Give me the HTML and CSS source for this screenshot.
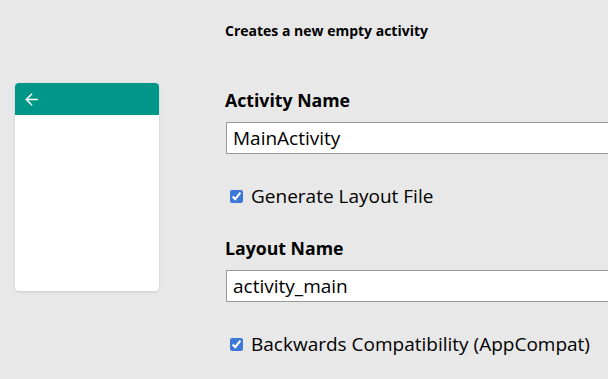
FILE: index.html
```html
<!DOCTYPE html>
<html lang="en">
<head>
  <meta charset="UTF-8" />
  <meta name="viewport" content="width=device-width, initial-scale=1.0" />
  <title>Empty Activity</title>
  <link rel="stylesheet" href="styles.css">
</head>
<body>
  <div class="wizard">
    <div class="preview">
      <div class="phone">
        <div class="appbar">
          <svg class="back" viewBox="0 0 24 24" width="19" height="19">
            <path d="M20 11H7.83l5.59-5.59L12 4l-8 8 8 8 1.41-1.41L7.83 13H20v-2z" fill="#ffffff"/>
          </svg>
        </div>
      </div>
    </div>

    <div class="form">
      <p class="description">Creates a new empty activity</p>

      <label class="field-label first" for="activity-name">Activity Name</label>
      <input class="text-field" type="text" id="activity-name" value="MainActivity">

      <label class="check-row">
        <input type="checkbox" checked>
        <span>Generate Layout File</span>
      </label>

      <label class="field-label" for="layout-name">Layout Name</label>
      <input class="text-field" type="text" id="layout-name" value="activity_main">

      <label class="check-row">
        <input type="checkbox" checked>
        <span>Backwards Compatibility (AppCompat)</span>
      </label>
    </div>
  </div>
</body>
</html>
```

FILE: styles.css
```css
body {
  margin: 0;
  background: #e8e8e8;
  font-family: 'Open Sans', 'Noto Sans', sans-serif;
  color: #000000;
  overflow: hidden;
}

.wizard {
  display: flex;
  padding-left: 15px;
}

.preview {
  padding-top: 83px;
  width: 210px;
  flex-shrink: 0;
}

.phone {
  width: 144px;
  height: 208px;
  background: #ffffff;
  border-radius: 4px;
  overflow: hidden;
  box-shadow: 0 1px 3px rgba(0,0,0,0.12);
}

.appbar {
  height: 32px;
  background: #009688;
  display: flex;
  align-items: center;
  padding-left: 7px;
}

.back {
  display: block;
}

.form {
  width: 420px;
  flex-shrink: 0;
  display: flex;
  flex-direction: column;
  align-items: flex-start;
}

.description {
  margin: 21px 0 0 0;
  font-size: 14px;
  line-height: 19px;
  font-weight: bold;
}

.field-label {
  font-size: 17.7px;
  line-height: 24px;
  font-weight: bold;
  margin-top: 27px;
  margin-bottom: 10px;
}

.field-label.first {
  margin-top: 48px;
}

.text-field {
  box-sizing: border-box;
  width: 100%;
  height: 32px;
  margin: 0 0 0 1px;
  padding: 0 6px;
  border: 1px solid #999999;
  background: #ffffff;
  font-family: inherit;
  font-size: 19px;
  color: #000000;
  outline: none;
}

.check-row {
  display: flex;
  align-items: center;
  gap: 8px;
  height: 26px;
  margin-top: 29px;
  margin-left: 5px;
  font-size: 19px;
}

.check-row input {
  margin: 0;
  width: 13px;
  height: 13px;
  accent-color: #3b78d8;
}
```
